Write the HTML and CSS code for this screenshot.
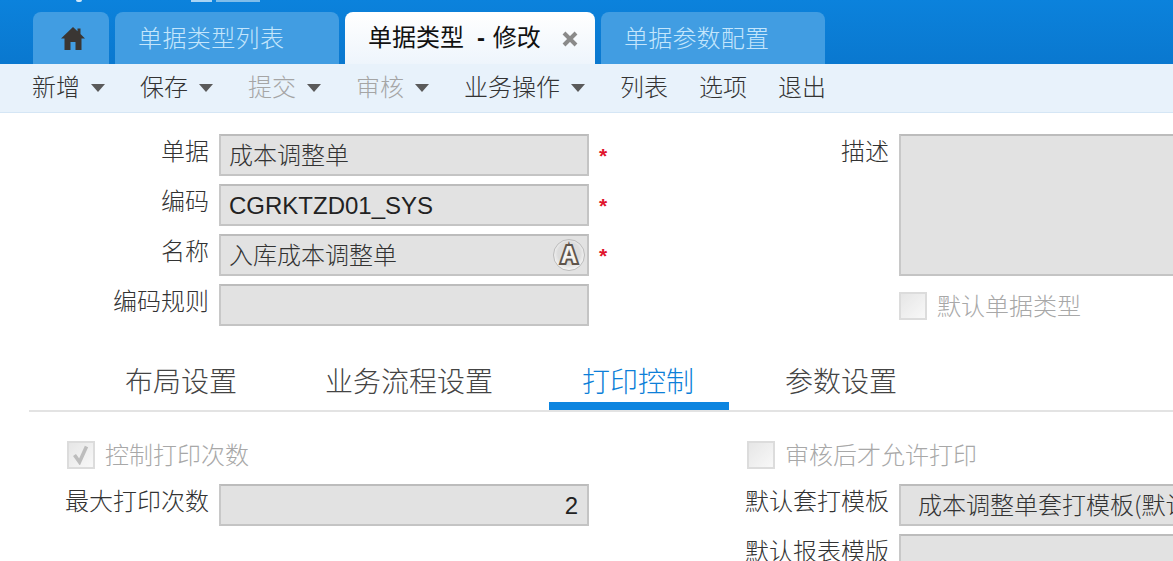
FILE: index.html
```html
<!DOCTYPE html>
<html lang="zh-CN">
<head>
<meta charset="utf-8">
<title>单据类型 - 修改</title>
<link rel="stylesheet" href="styles.css">
</head>
<body>
<header class="tabbar">
  <a class="tab tab-home" aria-label="首页">
    <svg width="24" height="23" viewBox="0 0 24 23"><path fill="#3a3633" d="M12 0 L16.5 4.2 L16.5 1.5 L19.5 1.5 L19.5 7 L24 11.5 L20.5 11.5 L20.5 23 L14.5 23 L14.5 15 L9.5 15 L9.5 23 L3.5 23 L3.5 11.5 L0 11.5 Z"/></svg>
  </a>
  <a class="tab tab-list">单据类型列表</a>
  <a class="tab tab-active"><span class="tab-title">单据类型<b class="dash">- </b>修改</span>
    <svg class="close" width="16" height="16" viewBox="0 0 16 16"><path d="M2 2 L14 14 M14 2 L2 14" stroke="#8a8a8a" stroke-width="4"/></svg>
  </a>
  <a class="tab tab-param">单据参数配置</a>
</header>

<nav class="toolbar">
  <span class="tool tool-menu">新增<i class="caret"></i></span>
  <span class="tool tool-menu">保存<i class="caret"></i></span>
  <span class="tool tool-menu is-off">提交<i class="caret"></i></span>
  <span class="tool tool-menu is-off">审核<i class="caret"></i></span>
  <span class="tool tool-menu">业务操作<i class="caret"></i></span>
  <span class="tool">列表</span>
  <span class="tool">选项</span>
  <span class="tool">退出</span>
</nav>

<section class="form-top">
  <div class="col">
    <div class="row"><label class="lbl">单据</label><div class="field">成本调整单</div><span class="star">*</span></div>
    <div class="row"><label class="lbl">编码</label><div class="field latin">CGRKTZD01_SYS</div><span class="star">*</span></div>
    <div class="row"><label class="lbl">名称</label><div class="field has-btn">入库成本调整单<span class="lang-btn">A</span></div><span class="star">*</span></div>
    <div class="row"><label class="lbl">编码规则</label><div class="field"></div></div>
  </div>
  <div class="col">
    <div class="row row-area"><label class="lbl">描述</label><div class="field field-area"></div></div>
    <div class="row row-check row-check-inset"><span class="check"></span><span class="check-text">默认单据类型</span></div>
  </div>
</section>

<div class="subtabs">
  <span class="subtab st-layout">布局设置</span>
  <span class="subtab st-flow">业务流程设置</span>
  <span class="subtab st-print">打印控制</span>
  <span class="subtab st-param">参数设置</span>
</div>

<section class="panel">
  <div class="col">
    <div class="row row-check"><span class="check is-checked"><svg width="20" height="20" viewBox="0 0 20 20"><path d="M3.5 10 L8.5 17 L15.5 1.5" fill="none" stroke="#bdbdbd" stroke-width="3.6"/></svg></span><span class="check-text">控制打印次数</span></div>
    <div class="row"><label class="lbl">最大打印次数</label><div class="field latin num">2</div></div>
  </div>
  <div class="col">
    <div class="row row-check"><span class="check"></span><span class="check-text">审核后才允许打印</span></div>
    <div class="row"><label class="lbl">默认套打模板</label><div class="field field-wide">成本调整单套打模板(默认)</div></div>
    <div class="row"><label class="lbl">默认报表模版</label><div class="field"></div></div>
  </div>
</section>
</body>
</html>
```

FILE: styles.css
```css
* { box-sizing: border-box; }
html, body { margin: 0; height: 561px; overflow: hidden; background: #fff; }
body {
  width: 1173px;
  font-family: "Noto Sans CJK SC", "Liberation Sans", sans-serif;
  font-weight: 300;
  color: #333;
}

.tabbar {
  position: relative;
  height: 64px;
  padding: 12px 0 0 33px;
  display: flex;
  gap: 6px;
  background: linear-gradient(#0b82dc, #0a78cf);
}
.tabbar::before {
  content: "";
  position: absolute;
  left: 191px;
  top: 0;
  width: 69px;
  height: 2px;
  background: linear-gradient(90deg, #a9d4f4 0 30%, #0b82dc 30% 36%, #7fbdea 36% 100%);
}
.tabbar::after {
  content: "";
  position: absolute;
  left: 76px;
  top: 0;
  width: 6px;
  height: 2px;
  border-radius: 0 0 3px 3px;
  background: #cfe7f9;
}
.tab {
  height: 52px;
  border-radius: 8px 8px 0 0;
  background: #419de2;
  color: #c4e6fc;
  font-size: 24px;
  line-height: 50px;
  display: flex;
  align-items: center;
  white-space: nowrap;
}
.tab-home { width: 76px; padding-left: 4px; justify-content: center; }
.tab-list { width: 224px; padding-left: 23px; letter-spacing: .4px; padding-bottom: 2px; }
.tab-param { width: 224px; padding-left: 23px; letter-spacing: .2px; padding-bottom: 2px; }
.tab-active {
  width: 250px;
  padding: 0 0 2px 23px;
  background: linear-gradient(#fff, #eef5fc);
  color: #111;
  font-weight: 400;
}
.tab-title { white-space: pre; }
.dash { margin-left: 13px; margin-right: 1px; font-family: "Liberation Sans", sans-serif; font-weight: 700; }
.close { margin-left: 21px; margin-top: 3px; flex: none; }

.toolbar {
  height: 49px;
  padding: 0 0 5px 32px;
  display: flex;
  align-items: center;
  background: #e8f2fb;
  border-bottom: 1px solid #d5e6f5;
  font-size: 24px;
}
.tool { margin-right: 31px; color: #333; white-space: nowrap; display: flex; align-items: center; }
.tool-menu { margin-right: 35px; }
.is-off { color: #a5a5a5; }
.caret {
  margin-left: 11px;
  margin-top: 4px;
  width: 0; height: 0;
  border-left: 7px solid transparent;
  border-right: 7px solid transparent;
  border-top: 8px solid #5a5a5a;
}

.form-top { display: flex; padding-top: 21px; height: 247px; }
.col { flex: 0 0 680px; }
.row { display: flex; height: 42px; margin-bottom: 8px; position: relative; }
.lbl {
  flex: 0 0 209px;
  text-align: right;
  font-size: 24px;
  line-height: 32px;
  color: #333;
  white-space: nowrap;
}
.field {
  flex: 0 0 370px;
  margin-left: 10px;
  height: 42px;
  background: #e2e2e2;
  border: 2px solid #c4c4c4;
  border-top-color: #bcbcbc;
  border-left-color: #c8c8c8;
  padding: 0 0 4px 8px;
  font-size: 24px;
  color: #333;
  white-space: nowrap;
  overflow: hidden;
  display: flex;
  align-items: center;
  justify-content: space-between;
}
.field-wide { padding-left: 17px; }
.latin { font-family: "Liberation Sans", sans-serif; font-weight: 400; color: #222; padding: 2px 0 0 8px; }
.num { justify-content: flex-end; padding-right: 9px; }
.has-btn { padding: 0 2px 4px 8px; }
.lang-btn {
  width: 32px; height: 32px;
  margin-bottom: -4px;
  border-radius: 50%;
  background: radial-gradient(circle at 50% 45%, #dcdcdc 50%, #f6f6f6 74%, #a9a9a9 100%);
  border: 1px solid #bcbcbc;
  font-family: "Liberation Sans", sans-serif;
  font-weight: 700;
  font-size: 23px;
  line-height: 30px;
  text-align: center;
  color: #f5f3f0;
  -webkit-text-stroke: 4px #5f554c;
  paint-order: stroke fill;
  flex: none;
  display: block;
}
.star {
  margin-left: 10px;
  color: #e0142c;
  font-family: "Liberation Sans", sans-serif;
  font-weight: 700;
  font-size: 21px;
  line-height: 44px;
}
.row-area { height: 142px; margin-bottom: 16px; }
.field-area { height: 142px; }
.row-check { height: 28px; margin-bottom: 15px; padding-left: 67px; align-items: center; }
.row-check-inset { padding-left: 219px; }
.check {
  flex: none;
  width: 28px; height: 28px;
  border: 2px solid #dcdcdc;
  background: linear-gradient(135deg, #e6e6e6, #f8f8f8);
  display: flex;
  align-items: center;
  justify-content: center;
}
.check-text { margin-left: 10px; padding-bottom: 4px; font-size: 24px; color: #a8a8a8; white-space: nowrap; }

.subtabs {
  height: 52px;
  margin-left: 29px;
  display: flex;
  border-bottom: 2px solid #e3e3e3;
}
.subtab {
  font-size: 28px;
  line-height: 41px;
  color: #444;
  height: 50px;
  white-space: nowrap;
}
.st-layout { margin-left: 96px; }
.st-flow { margin-left: 88px; }
.st-print {
  margin-left: 56px;
  padding: 0 33px;
  width: 180px;
  color: #0d7fd8;
  border-bottom: 8px solid #0d85e0;
}
.st-param { margin-left: 56px; }

.panel { display: flex; padding-top: 29px; }
```
